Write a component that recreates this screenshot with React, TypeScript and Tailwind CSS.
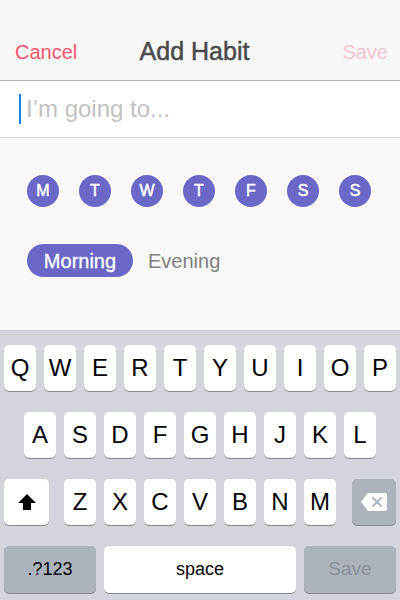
import React from "react";

const DAYS = ["M", "T", "W", "T", "F", "S", "S"];
const ROW1 = ["Q", "W", "E", "R", "T", "Y", "U", "I", "O", "P"];
const ROW2 = ["A", "S", "D", "F", "G", "H", "J", "K", "L"];
const ROW3 = ["Z", "X", "C", "V", "B", "N", "M"];

const font = { fontFamily: '"Liberation Sans", Arial, sans-serif' };

function Key({ label }: { label: string }) {
  return (
    <div className="flex h-[46px] w-[32px] items-center justify-center rounded-[5px] bg-white text-[24px] leading-none text-black shadow-[0_1px_0_#898a8e]">
      {label}
    </div>
  );
}

function ShiftIcon() {
  return (
    <svg width="20" height="18" viewBox="0 0 20 18">
      <path d="M10 1 L19 10 L14 10 L14 17 L6 17 L6 10 L1 10 Z" fill="#000" />
    </svg>
  );
}

function DeleteIcon() {
  return (
    <svg width="28" height="20" viewBox="0 0 28 20">
      <path d="M8 1 H25 a2 2 0 0 1 2 2 V17 a2 2 0 0 1 -2 2 H8 L1 10 Z" fill="#fff" />
      <path d="M13 6 L21 14 M21 6 L13 14" stroke="#adb3bc" strokeWidth="1.8" strokeLinecap="round" />
    </svg>
  );
}

export default function App() {
  return (
    <div className="flex h-[600px] w-[400px] flex-col bg-[#f8f8f8]" style={font}>
      {/* nav bar */}
      <div className="flex h-[81px] items-center border-b border-[#b4b4b4] bg-[#f7f7f7] pl-[15px] pr-[12px] pt-[24px]">
        <span className="w-[70px] text-[20px] text-[#f4566e]">Cancel</span>
        <span className="flex-1 pr-[14px] text-center text-[25px] text-[#4a4a4a] [-webkit-text-stroke:0.5px_#4a4a4a]">
          Add Habit
        </span>
        <span className="w-[70px] text-right text-[20px] text-[#f8c4cf]">Save</span>
      </div>

      {/* text input */}
      <div className="flex h-[57px] items-center border-b border-[#dadada] bg-white pl-[19px]">
        <div className="h-[30px] w-[2px] bg-[#1f7bf0]" />
        <span className="ml-[5px] text-[24px] text-[#c2c2c2]">I’m going to...</span>
      </div>

      {/* schedule */}
      <div className="flex flex-1 flex-col px-[27px] pt-[37px]">
        <div className="flex gap-[20px]">
          {DAYS.map((d, i) => (
            <div
              key={i}
              className="flex h-[32px] w-[32px] items-center justify-center rounded-full bg-[#6b67c7] text-[16px] text-white [-webkit-text-stroke:0.5px_#fff]"
            >
              {d}
            </div>
          ))}
        </div>
        <div className="mt-[37px] flex items-center gap-[15px]">
          <div className="flex h-[33px] w-[106px] items-center justify-center rounded-full bg-[#6b67c7] text-[20px] text-white [-webkit-text-stroke:0.3px_#fff]">
            Morning
          </div>
          <span className="text-[20px] text-[#808080]">Evening</span>
        </div>
      </div>

      {/* keyboard */}
      <div className="flex h-[270px] flex-col gap-[21px] border-t border-[#c9cdd3] bg-[#d2d5db] px-[4px] pt-[14px]">
        <div className="flex justify-between">
          {ROW1.map((k) => (
            <Key key={k} label={k} />
          ))}
        </div>
        <div className="flex justify-center gap-[8px]">
          {ROW2.map((k) => (
            <Key key={k} label={k} />
          ))}
        </div>
        <div className="flex items-center">
          <div className="flex h-[46px] w-[45px] items-center justify-center rounded-[5px] bg-white shadow-[0_1px_0_#898a8e]">
            <ShiftIcon />
          </div>
          <div className="ml-[15px] flex gap-[8px]">
            {ROW3.map((k) => (
              <Key key={k} label={k} />
            ))}
          </div>
          <div className="ml-auto flex h-[46px] w-[44px] items-center justify-center rounded-[5px] bg-[#adb3bc] shadow-[0_1px_0_#898a8e]">
            <DeleteIcon />
          </div>
        </div>
        <div className="flex justify-between">
          <div className="flex h-[47px] w-[92px] items-center justify-center rounded-[5px] bg-[#adb3bc] text-[18px] text-black shadow-[0_1px_0_#898a8e]">
            .?123
          </div>
          <div className="flex h-[47px] w-[192px] items-center justify-center rounded-[5px] bg-white text-[18px] text-black shadow-[0_1px_0_#898a8e]">
            space
          </div>
          <div className="flex h-[47px] w-[92px] items-center justify-center rounded-[5px] bg-[#adb3bc] text-[19px] text-[#8b9099] shadow-[0_1px_0_#898a8e]">
            Save
          </div>
        </div>
      </div>
    </div>
  );
}
